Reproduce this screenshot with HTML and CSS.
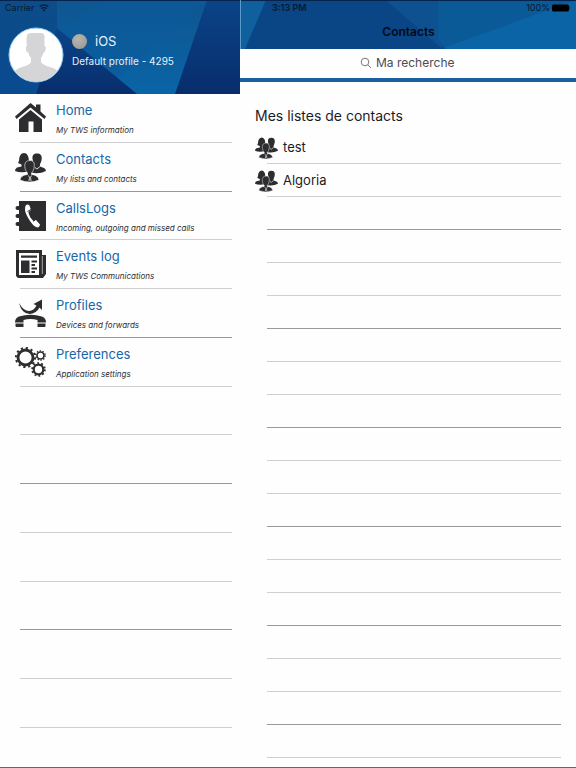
FILE: index.html
```html
<!DOCTYPE html>
<html lang="fr">
<head>
  <meta charset="utf-8">
  <meta name="viewport" content="width=device-width, initial-scale=1">
  <title>Contacts</title>
  <link rel="stylesheet" href="styles.css">
</head>
<body>

  <!-- shared symbols -->
  <svg class="symbols" width="0" height="0" aria-hidden="true">
    <symbol id="icon-people" viewBox="0 0 31 31">
      <path d="M9 2c-3 0-4.500 3-4.800 6-.1 2-.7 3-1.200 4l3.500 1.500v2L2 16.500Q0 17.500 0 20q6 2.500 15 0v-5l-3.500-1.500L15 12c-.6-1-1.200-2-1.300-4C13.500 5 12 2 9 2z"/>
      <path d="M22 2.500c-3.500 0-4.800 2-4.500 5 .2 2.500 1 4 1.500 6V17l-3 1v3.500q8 2 15-1.500-.5-2.500-2-3l-4-1.500v-2c.8-2 1.600-3.500 1.700-6 .2-3-1.200-5-4.700-5z"/>
      <path class="cut" d="M15 9.500c-3.800 0-5.500 2.500-5.200 6 .2 3 1.200 5 2.700 6.500v1.500c-3 .5-6.500 1-7.500 5.500q9.500 4 19 0c-1-4.500-4.500-5-7.500-5.500V22c1.500-1.500 2.500-3.500 2.700-6.500.3-3.500-.4-6-4.200-6z"/>
      <path class="gap" stroke-width=".8" d="M13.500 24.500l1 2L14 30M16.500 24.500l-1 2L16 30M20 16.500l2 1.500 3-2.500"/>
    </symbol>
  </svg>

  <div class="app">
    <aside class="sidebar">
      <header class="profile">
        <svg class="backdrop" viewBox="0 0 240 94" preserveAspectRatio="none" aria-hidden="true">
          <defs>
            <linearGradient id="shade" x1="0" y1="0" x2="0" y2="1">
              <stop offset="0" stop-color="#0e5690"/>
              <stop offset="1" stop-color="#0a64a6"/>
            </linearGradient>
            <linearGradient id="left" x1="0" y1="0" x2="0" y2="1">
              <stop offset="0" stop-color="#0c4c88"/>
              <stop offset="1" stop-color="#0a4a90"/>
            </linearGradient>
            <linearGradient id="deep" x1="0" y1="0" x2="0" y2="1">
              <stop offset="0" stop-color="#0a4488"/>
              <stop offset="1" stop-color="#082d6c"/>
            </linearGradient>
          </defs>
          <path fill="url(#shade)" d="M0 0h240v94H0z"/>
          <path fill="url(#left)" d="M0 0h57v29L36 94H0z"/>
          <path fill="#0b5a9c" d="M57 28L107 0h100l-90 78z" opacity=".5"/>
          <path fill="url(#deep)" d="M57 28l80 66H36z"/>
          <path fill="url(#deep)" d="M207 0h33v94h-65z"/>
          <path fill="#04234f" d="M0 0h240v1H0z"/>
        </svg>
        <div class="status">
          <span>Carrier</span>
          <svg width="10" height="8" viewBox="0 0 10 8" aria-hidden="true">
            <path fill="none" stroke="#08192f" stroke-width="1.300" d="M.7 2.600q4.300-3.400 8.600 0M2.400 4.600q2.600-2 5.200 0"/>
            <path fill="#08192f" d="M3.600 6q1.400-1 2.800 0L5 7.700z"/>
          </svg>
        </div>
        <div class="user">
          <svg class="avatar" viewBox="0 0 56 56" role="img" aria-label="Avatar">
            <defs><clipPath id="face"><circle cx="28" cy="28" r="26.500"/></clipPath></defs>
            <circle cx="28" cy="28" r="27" fill="#fff" stroke="#8fc6ea" stroke-width="1"/>
            <path clip-path="url(#face)" fill="#d5d4d6" d="M19 8q1-2 5-2h9q3 0 3.500 3v10q2 0 1 4-.5 2-2 3-1 3-2.500 5v4q2 3 9 5 10 3 13 10v8H2v-8q3-7 12-10 8-2 9-5v-4q-2-2-2.500-5-2-1-2.500-3-.5-4 1-4-1-6 0-11z"/>
          </svg>
          <div class="identity">
            <div class="name"><span class="presence"></span>iOS</div>
            <div class="line">Default profile - 4295</div>
          </div>
        </div>
      </header>

      <nav class="menu-wrap">
        <ul class="menu">
          <li><a href="#home">
            <svg class="icon" viewBox="0 0 31 31" aria-hidden="true">
              <path d="M15.500 1L21 5.500V2.500h4.500v7l5.500 5-1.500 2.500-14-11.500L1.500 17 0 14.500z"/>
              <path d="M15.500 8L27 17.500V30h-8.500V19.500h-5V30H4V17.500z"/>
            </svg>
            <span class="label">Home<small>My TWS information</small></span>
          </a></li>
          <li><a href="#contacts">
            <svg class="icon" viewBox="0 0 31 31" aria-hidden="true"><use href="#icon-people"/></svg>
            <span class="label">Contacts<small>My lists and contacts</small></span>
          </a></li>
          <li><a href="#calls">
            <svg class="icon" viewBox="0 0 31 31" aria-hidden="true">
              <path d="M4 1h27v30H4v-5H2.500a1.500 1.500 0 0 1 0-4H4v-4H2.500a1.500 1.500 0 0 1 0-4H4v-4H2.500a1.500 1.500 0 0 1 0-4H4z"/>
              <path class="light" d="M11 5q2-1 3.500.5L16 10l-2.500 2q.5 5 5 9l2.500-1 4 4.500q0 2-2 3-4-.5-8-6.500-4-6-5-10.500Q9.500 7 11 5z"/>
              <path class="slit" d="M12.500 11.500L16 9.500M18 21.500l3-2.500"/>
            </svg>
            <span class="label">CallsLogs<small>Incoming, outgoing and missed calls</small></span>
          </a></li>
          <li><a href="#events">
            <svg class="icon" viewBox="0 0 31 31" aria-hidden="true">
              <path d="M1 2h26v5h4v19l-3 4H3l-2-2z"/>
              <path class="light" d="M4 5h20v22H4z"/>
              <path d="M6 7.500h16v2.200H6zM6 12.500h8.500V25H6zM16.500 12.500H22v2h-5.500zM16.500 16H20v2h-3.500zM16.500 19.500H22v2h-5.500zM16.500 23H20v2h-3.500z"/>
              <path class="gap" stroke-width=".6" d="M27.300 8v18"/>
            </svg>
            <span class="label">Events log<small>My TWS Communications</small></span>
          </a></li>
          <li><a href="#profiles">
            <svg class="icon" viewBox="0 0 31 31" aria-hidden="true">
              <path d="M4 6q4.500 8 10 8 5-.5 7.500-5.500L18.500 7 27 2.500v10.500L24.500 10.500Q21 17 14.500 17 6.500 16.500 4 6z"/>
              <path d="M0 25.500q0-4.500 4-6 11.500-3.500 23 0 4 1.500 4 6h-8.500V23q-7-2-14 0v2.500zM.5 26.500h8V30h-7q-1 0-1-1zM22.500 26.500h8V29q0 1-1 1h-7z"/>
            </svg>
            <span class="label">Profiles<small>Devices and forwards</small></span>
          </a></li>
          <li><a href="#preferences">
            <svg class="icon" viewBox="0 0 31 31" aria-hidden="true">
              <g class="gear">
                <circle cx="10.500" cy="11.500" r="7.500" stroke-width="2.800"/>
                <circle cx="10.500" cy="11.500" r="9.600" stroke-width="2" stroke-dasharray="2.200 2.826"/>
                <circle cx="25.500" cy="9.500" r="3.500" stroke-width="1.700"/>
                <circle cx="25.500" cy="9.500" r="4.700" stroke-width="1.300" stroke-dasharray="1.400 1.553"/>
                <circle cx="23.500" cy="23.500" r="4.800" stroke-width="2.200"/>
                <circle cx="23.500" cy="23.500" r="6.400" stroke-width="1.800" stroke-dasharray="1.800 2.221"/>
              </g>
            </svg>
            <span class="label">Preferences<small>Application settings</small></span>
          </a></li>
          <li></li>
          <li></li>
          <li></li>
          <li></li>
          <li></li>
          <li></li>
          <li></li>
        </ul>
      </nav>
    </aside>

    <main class="content">
      <header class="navbar">
        <svg class="backdrop" viewBox="0 0 336 49" preserveAspectRatio="none" aria-hidden="true">
          <path fill="#0a4585" d="M0 0h336v49H0z"/>
          <path fill="#10609d" d="M0 0h25L4 49H0z"/>
          <path fill="#0d5190" d="M145 0h57v49z"/>
          <path fill="#0b5a98" d="M198 0h138v49H205l-7-9z"/>
          <path fill="#0b64a6" d="M336 0L203 48l4 1h129z"/>
          <path fill="#04234f" d="M0 0h336v1H0z"/>
        </svg>
        <div class="status status-main">
          <span class="time">3:13 PM</span>
          <span class="battery">100%
            <svg width="19" height="8" viewBox="0 0 19 8" aria-hidden="true">
              <rect width="17" height="7" y=".5" rx="1.500"/><path d="M17.500 2.500q1.500 1.500 0 3z"/>
            </svg>
          </span>
        </div>
        <h1>Contacts</h1>
      </header>

      <label class="search">
        <svg width="12" height="12" viewBox="0 0 12 12" aria-hidden="true">
          <circle cx="5" cy="5" r="3.800"/><path d="M7.800 7.800L11 11"/>
        </svg>
        <input type="search" placeholder="Ma recherche" aria-label="Ma recherche">
      </label>

      <section class="lists">
        <h2>Mes listes de contacts</h2>
        <ul class="rows">
          <li><a href="#test"><svg class="icon-small" viewBox="0 0 31 31" aria-hidden="true"><use href="#icon-people"/></svg>test</a></li>
          <li><a href="#algoria"><svg class="icon-small" viewBox="0 0 31 31" aria-hidden="true"><use href="#icon-people"/></svg>Algoria</a></li>
          <li></li>
          <li></li>
          <li></li>
          <li></li>
          <li></li>
          <li></li>
          <li></li>
          <li></li>
          <li></li>
          <li></li>
          <li></li>
          <li></li>
          <li></li>
          <li></li>
          <li></li>
          <li></li>
          <li></li>
        </ul>
      </section>
    </main>
  </div>

</body>
</html>
```
FILE: styles.css
```css
* { box-sizing: border-box; }
body {
  margin: 0;
  background: #fefefe;
  color: #1c1c1e;
  font-family: Inter, "Liberation Sans", sans-serif;
}
h1, h2, ul { margin: 0; padding: 0; font-weight: 400; }
ul { list-style: none; }
a { color: inherit; text-decoration: none; }
svg { flex: none; }
.symbols { position: absolute; }

.app {
  display: flex;
  min-height: 100vh;
  border-bottom: 1px solid #66666a;
}
.sidebar {
  display: flex;
  flex-direction: column;
  flex: 0 0 240px;
}
.content { flex: 1; min-width: 0; }

/* headers */
.profile, .navbar { position: relative; isolation: isolate; }
.backdrop {
  position: absolute;
  inset: 0;
  z-index: -1;
  width: 100%;
  height: 100%;
}
.profile { height: 94px; }
.navbar {
  height: 49px;
  border-left: 1px solid #5b9bca;
}
.status {
  display: flex;
  align-items: center;
  gap: 4px;
  height: 16px;
  padding: 0 5px;
  color: #08192f;
  font-size: 9px;
  line-height: 16px;
}
.status-main { justify-content: space-between; }
.time { padding-left: 26px; font-weight: 600; }
.battery { display: flex; align-items: center; gap: 2px; }
.navbar h1 {
  color: #020a18;
  font-size: 12px;
  font-weight: 600;
  line-height: 32px;
  text-align: center;
}
.user {
  display: flex;
  align-items: center;
  gap: 8px;
  padding: 11px 8px 0;
}
.avatar { width: 56px; height: 56px; }
.identity { padding-bottom: 8px; color: #e6f1fb; }
.name {
  display: flex;
  align-items: center;
  gap: 8px;
  font-size: 13px;
  line-height: 20px;
}
.presence {
  width: 15px;
  height: 15px;
  border-radius: 50%;
  background: radial-gradient(circle at 40% 35%, #b9b5b0, #99958f);
}
.line { font-size: 10px; line-height: 20px; }

/* menu */
.menu-wrap {
  display: flex;
  flex: 1;
  padding: 0 8px 39px 15px;
}
.menu {
  display: flex;
  flex: 1;
  flex-direction: column;
}
.menu li {
  flex: 1;
  min-height: 48px;
  background: linear-gradient(#cfcfd1, #cfcfd1) 5px 100% / 100% 1px no-repeat;
}
.menu li:nth-child(3n + 2) { background-image: linear-gradient(#98989c, #98989c); }
.menu a {
  display: flex;
  gap: 10px;
  padding-top: 8px;
}
.icon { width: 31px; height: 31px; fill: #2d2d2f; }
.label { color: #1766a8; font-size: 13px; line-height: 16px; }
.label small {
  display: block;
  padding-top: 4px;
  color: #2e2e30;
  font-size: 8px;
  font-style: italic;
}
.cut { stroke: #fefefe; stroke-width: .6px; }
.gap { fill: none; stroke: #fefefe; }
.light { fill: #fefefe; }
.slit { fill: none; stroke: #2d2d2f; stroke-width: 1px; }
.gear { fill: none; stroke: #2d2d2f; }

/* search */
.search {
  display: flex;
  align-items: center;
  justify-content: center;
  gap: 4px;
  height: 33px;
  padding: 0 0 2px 16px;
  border-bottom: 4px solid #1a5f9f;
  background: #fefefe;
}
.search svg { fill: none; stroke: #77777b; }
.search input {
  width: 96px;
  padding: 0;
  border: 0;
  outline: 0;
  appearance: none;
  background: none;
  color: #3f3f43;
  font: 12px/20px Inter, "Liberation Sans", sans-serif;
}
.search input::-webkit-search-cancel-button { display: none; }
.search input::placeholder { color: #4c4c50; opacity: 1; }

/* contact lists */
.lists { padding: 21px 15px 8px; }
.lists h2 {
  padding-bottom: 2px;
  font-size: 14px;
  line-height: 26px;
}
.rows li {
  height: 33px;
  background: linear-gradient(#cfcfd1, #cfcfd1) 12px 100% / 100% 1px no-repeat;
}
.rows li:nth-child(3n) { background-image: linear-gradient(#9a9a9e, #9a9a9e); }
.rows a {
  display: flex;
  align-items: center;
  gap: 5px;
  height: 32px;
  font-size: 13px;
}
.icon-small { width: 23px; height: 23px; fill: #2d2d2f; }
```
